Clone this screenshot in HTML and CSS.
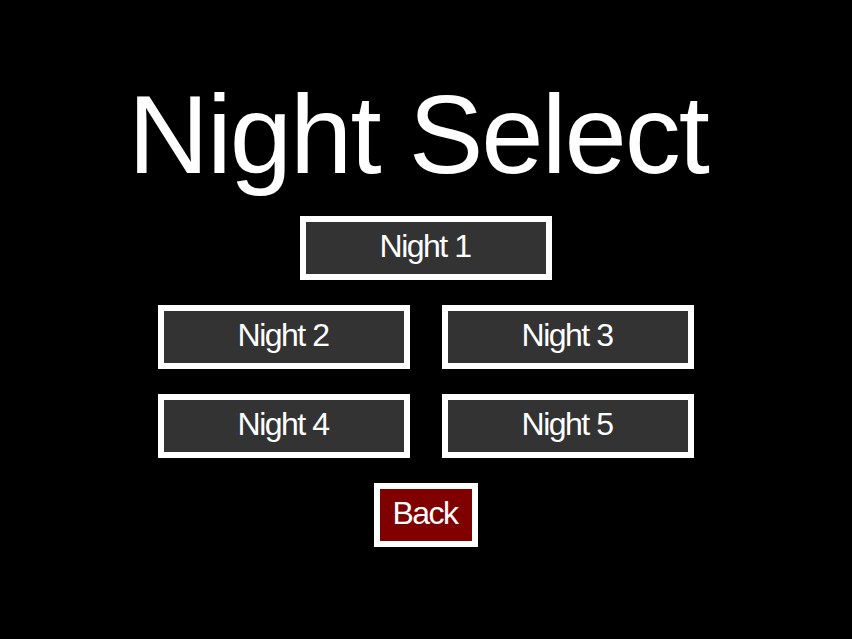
FILE: index.html
```html
<!DOCTYPE html>
<html lang="en">
<head>
<meta charset="utf-8">
<title>Night Select</title>
<link rel="stylesheet" href="styles.css">
</head>
<body>
  <main class="menu">
    <h1 class="menu-title">Night Select</h1>
    <button class="night-btn">Night 1</button>
    <div class="night-grid">
      <button class="night-btn">Night 2</button>
      <button class="night-btn">Night 3</button>
      <button class="night-btn">Night 4</button>
      <button class="night-btn">Night 5</button>
    </div>
    <button class="night-btn back-btn">Back</button>
  </main>
</body>
</html>
```

FILE: styles.css
```css
html, body {
  margin: 0;
  padding: 0;
  background: #000;
}

body {
  width: 852px;
  height: 639px;
  overflow: hidden;
  font-family: "Liberation Sans", Arial, sans-serif;
  color: #fff;
}

.menu {
  display: flex;
  flex-direction: column;
  align-items: center;
  gap: 25px;
}

.menu-title {
  margin: 79px 0 0 0;
  padding-right: 16px;
  font-size: 112px;
  line-height: 112px;
  font-weight: normal;
  letter-spacing: -2px;
  color: #fff;
}

.night-grid {
  display: grid;
  grid-template-columns: 252px 252px;
  column-gap: 32px;
  row-gap: 25px;
}

.night-btn {
  box-sizing: border-box;
  width: 252px;
  height: 64px;
  margin: 0;
  padding: 0 2px 4px 0;
  border: 6px solid #fff;
  background: #333;
  color: #fff;
  font-family: "Liberation Sans", Arial, sans-serif;
  font-size: 32px;
  line-height: 32px;
  letter-spacing: -1.5px;
  display: flex;
  align-items: center;
  justify-content: center;
  cursor: pointer;
}

.back-btn {
  width: 104px;
  background: #800000;
}
```
